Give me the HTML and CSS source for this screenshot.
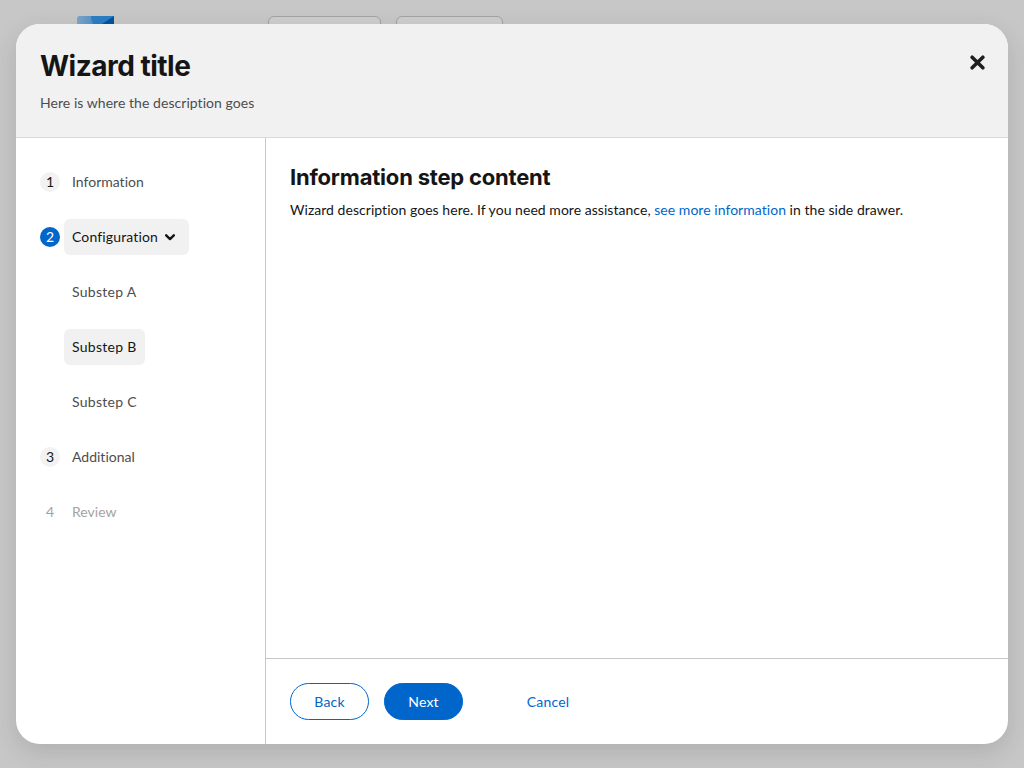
FILE: index.html
```html
<!DOCTYPE html>
<html lang="en">
<head>
<meta charset="utf-8">
<title>Wizard</title>
<link rel="stylesheet" href="styles.css">
</head>
<body>
<div class="page" aria-hidden="true">
  <svg class="brand" viewBox="0 0 37 36"><defs><linearGradient id="g"><stop offset="0" stop-color="#80a6c9"/><stop offset="1" stop-color="#5593c8"/></linearGradient></defs><path fill="#2b7dc3" d="M4 0h33v36H0V4q0-4 4-4"/><path fill="url(#g)" d="M4 0h10q0 4 2 8v28H0V4q0-4 4-4"/><path fill="#0053a3" d="M37 0v36L10 18z"/></svg>
  <span class="tile first"></span>
  <span class="tile second"></span>
</div>
<section class="modal" role="dialog">
  <header class="header">
    <div>
      <h1 class="title">Wizard title</h1>
      <p class="description">Here is where the description goes</p>
    </div>
    <button class="close" aria-label="Close"><svg viewBox="0 0 14 14"><path d="M2 2l10 10M12 2L2 12"/></svg></button>
  </header>
  <div class="body">
    <nav class="nav">
      <div class="step"><span class="num">1</span><a class="link">Information</a></div>
      <div class="step"><span class="num active">2</span><a class="link current expandable">Configuration<svg class="chevron" viewBox="0 0 10 7"><path d="M1.2 1.3L5 5.1l3.8-3.8"/></svg></a></div>
      <div class="step sub"><a class="link">Substep A</a></div>
      <div class="step sub"><a class="link current">Substep B</a></div>
      <div class="step sub"><a class="link">Substep C</a></div>
      <div class="step"><span class="num">3</span><a class="link">Additional</a></div>
      <div class="step disabled"><span class="num">4</span><a class="link">Review</a></div>
    </nav>
    <div class="main">
      <main class="content">
        <h2 class="heading">Information step content</h2>
        <p class="text">Wizard description goes here. If you need more assistance, <a class="info-link">see more information</a> in the side drawer.</p>
      </main>
      <footer class="footer">
        <button class="button back">Back</button>
        <button class="button next">Next</button>
        <button class="button cancel">Cancel</button>
      </footer>
    </div>
  </div>
</section>
</body>
</html>
```
FILE: styles.css
```css
* { box-sizing: border-box; }
body {
  margin: 0;
  padding: 24px 16px;
  height: 768px;
  overflow: hidden;
  background: #c7c7c7;
  color: #151515;
  font: 14px/21px Lato, "Noto Sans", sans-serif;
  font-variant-ligatures: none;
}
h1, h2, p { margin: 0; }
button { font: inherit; cursor: pointer; }
.page { position: absolute; left: 0; top: 16px; width: 1024px; height: 40px; display: flex; padding-left: 77px; }
.brand { width: 37px; height: 36px; }
.tile { height: 36px; border: 1px solid #a3a3a3; border-radius: 6px; background: #cecece; }
.first { width: 112.5px; margin-left: 154px; }
.second { width: 107px; margin-left: 15.5px; }
.modal {
  position: relative;
  display: flex;
  flex-direction: column;
  height: 720px;
  border-radius: 24px;
  overflow: hidden;
  background: #fff;
  box-shadow: 0 8px 24px rgba(41, 41, 41, .15);
}
.header {
  display: flex;
  justify-content: space-between;
  height: 114px;
  padding: 24px;
  background: #f1f1f1;
  border-bottom: 1px solid #d8d8d8;
}
.title { font: 700 28px/36px "Inter", sans-serif; letter-spacing: -.5px; }
.description { margin-top: 8px; color: #4d4d4d; letter-spacing: .05px; }
.close { display: flex; width: 15px; height: 15px; margin: 7px -.5px 0 0; padding: 0; border: 0; background: none; }
.close svg { width: 15px; height: 15px; fill: none; stroke: #1f1f1f; stroke-width: 3.3; stroke-linecap: round; }
.body { display: flex; flex: 1; min-height: 0; }
.nav { width: 250px; padding: 26px 24px; border-right: 1px solid #c7c7c7; display: flex; flex-direction: column; gap: 19px; }
.step { display: flex; height: 36px; align-items: center; }
.sub { padding-left: 24px; }
.num { width: 20px; height: 20px; margin: 0 4px 1px 0; line-height: 20px; text-align: center; border-radius: 50%; background: #f2f2f2; }
.num.active { background: #06c; color: #fff; }
.link { display: flex; align-items: center; height: 36px; padding: 0 8px; line-height: 20px; color: #4d4d4d; border-radius: 6px; white-space: nowrap; }
.sub .link { letter-spacing: .28px; }
.current { background: #f1f1f1; }
.link.current { color: #151515; }
.expandable { width: 125px; letter-spacing: .14px; }
.chevron { width: 10px; height: 7px; margin-left: auto; margin-right: 6px; fill: none; stroke: #151515; stroke-width: 2.4; stroke-linecap: round; stroke-linejoin: round; }
.disabled .num { background: none; color: #a3a3a3; }
.disabled .link { color: #a3a3a3; }
.main { display: flex; flex: 1; flex-direction: column; }
.content { flex: 1; padding: 25px 24px; }
.heading { font: 700 22px/29px "Inter", sans-serif; letter-spacing: -.2px; }
.text { margin-top: 7px; white-space: nowrap; letter-spacing: .04px; }
.info-link { color: #06c; }
.footer { display: flex; height: 86px; padding: 24px; border-top: 1px solid #c7c7c7; }
.button { height: 37px; padding: 0; border: 1px solid #06c; border-radius: 19px; letter-spacing: .15px; }
.back { width: 79px; color: #06c; background: #fff; }
.next { width: 79px; margin-left: 15px; color: #fff; background: #06c; }
.cancel { width: 92px; margin-left: 39px; color: #06c; background: none; border-color: transparent; }
```
